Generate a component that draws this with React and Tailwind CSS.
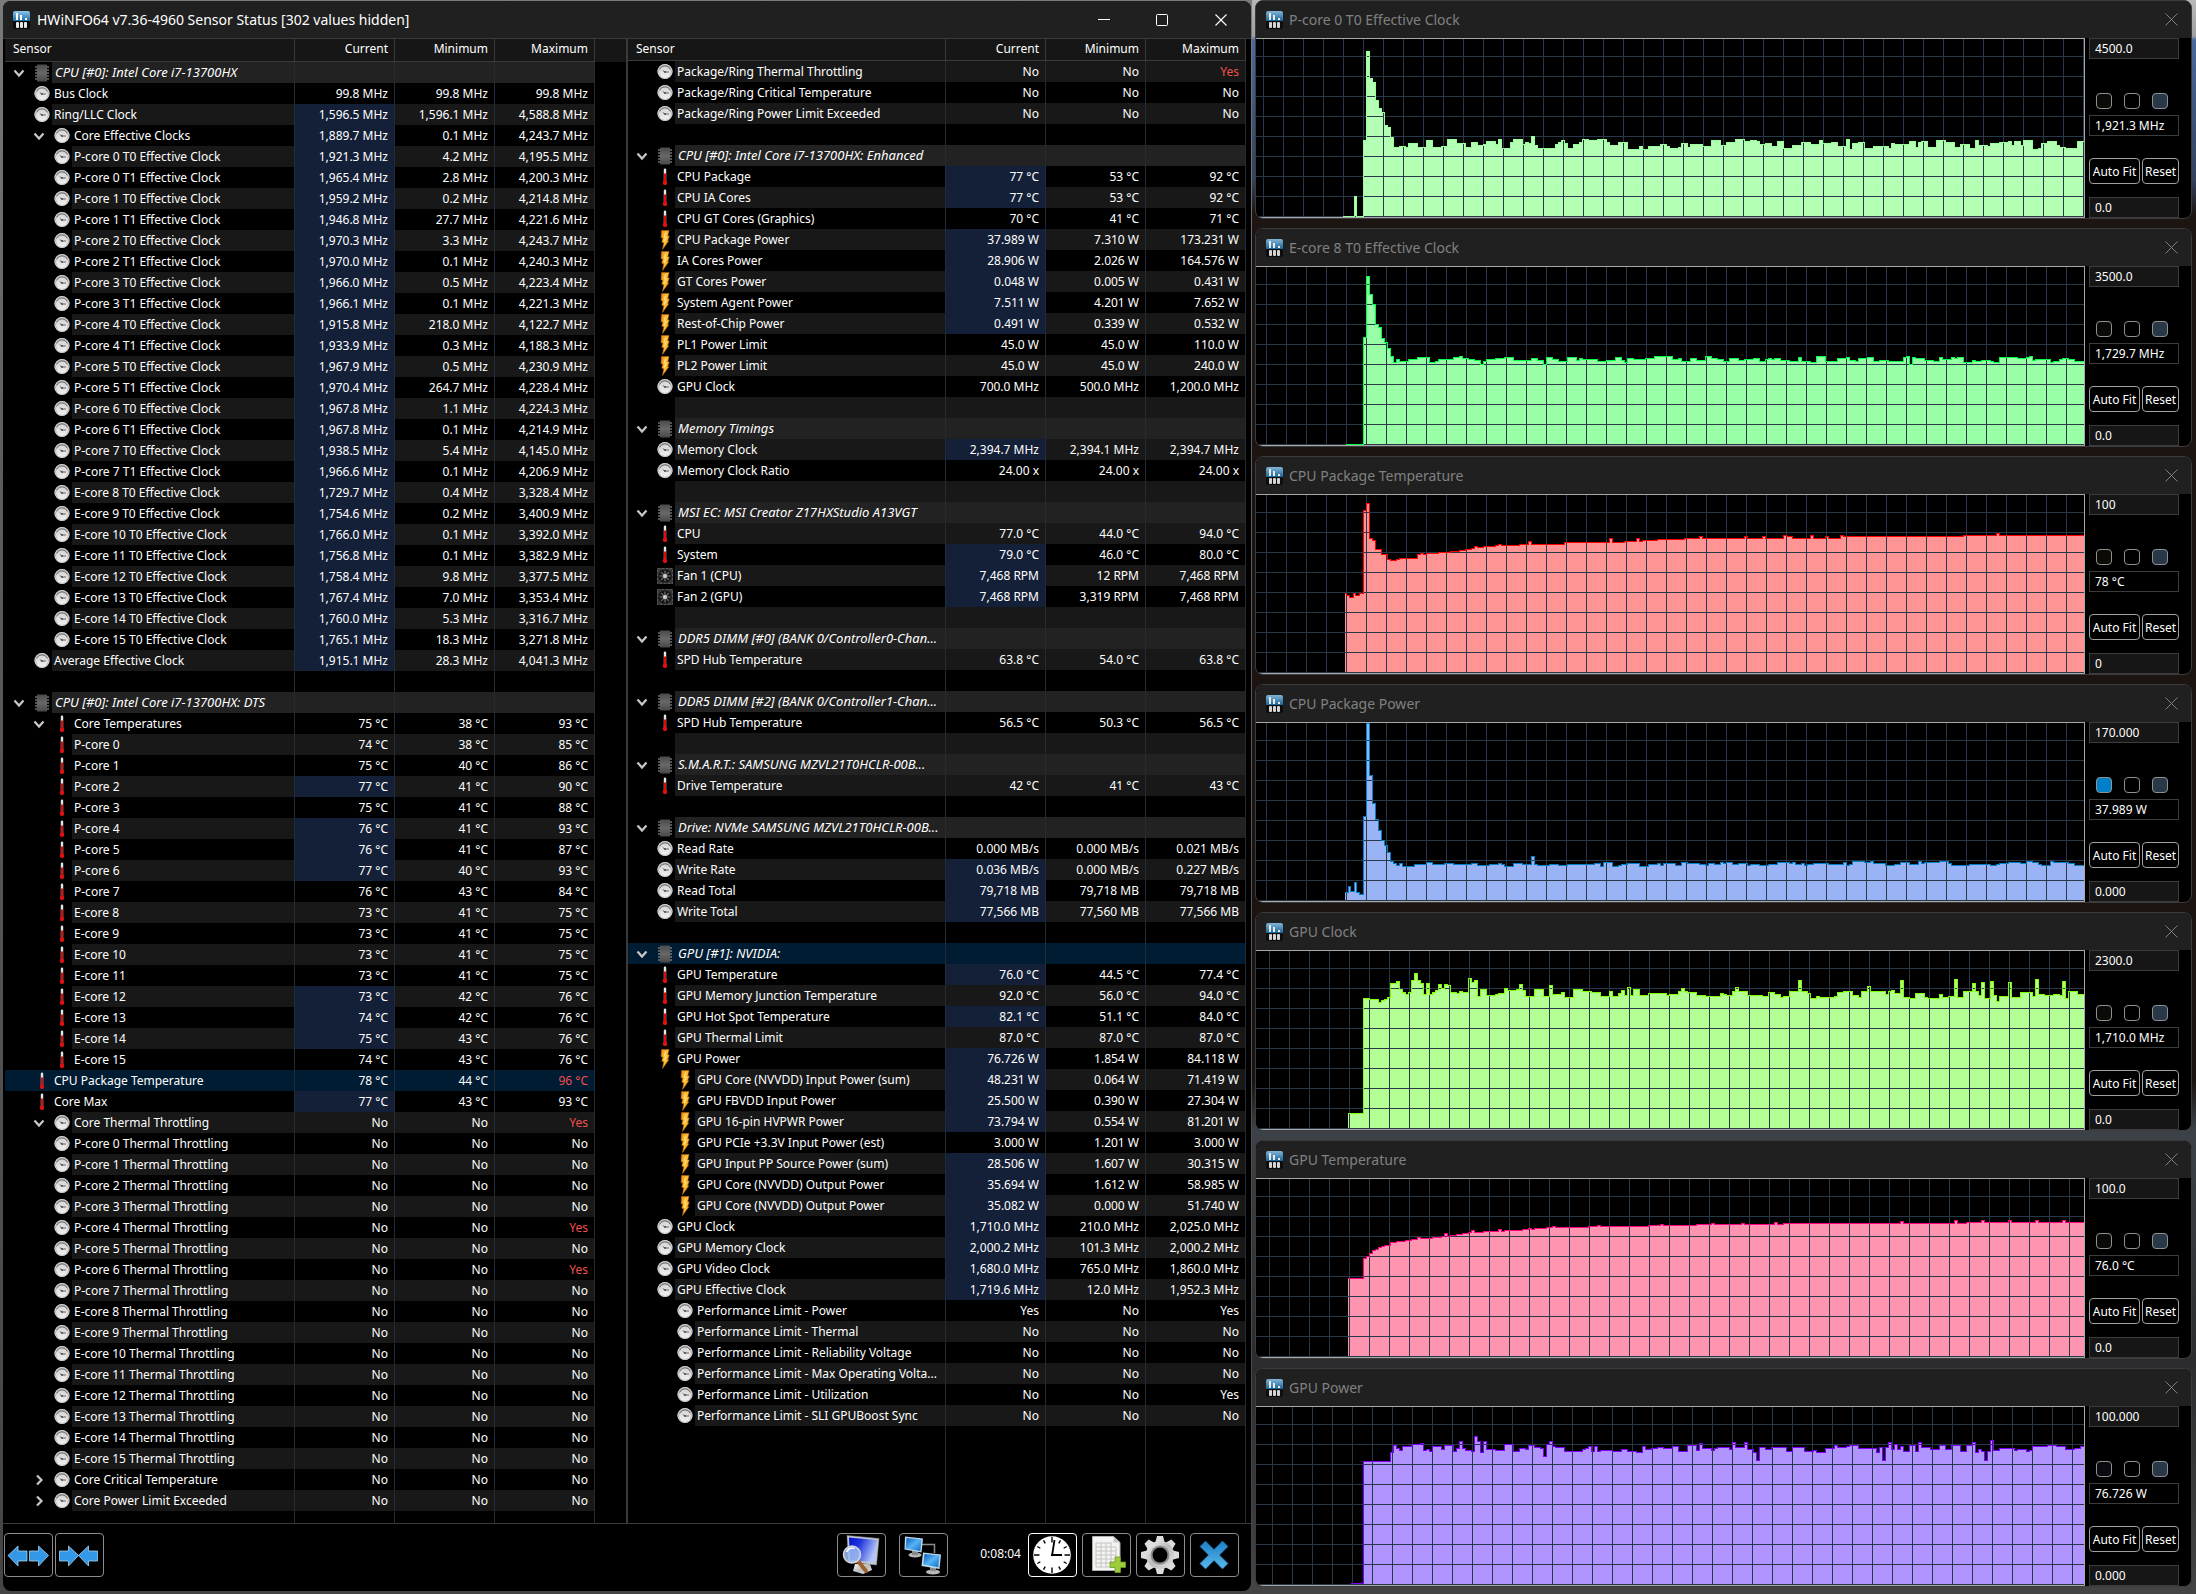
import React from "react";

/* ---------- sensor data: depth | chevron | icon | name | current | min | max | flags ---------- */
/* flags: b = current value changed, r = maximum in red, s = selected row */

const CORES = [
  ["P-core 0 T0", "1,921.3", "4.2", "4,195.5"],
  ["P-core 0 T1", "1,965.4", "2.8", "4,200.3"],
  ["P-core 1 T0", "1,959.2", "0.2", "4,214.8"],
  ["P-core 1 T1", "1,946.8", "27.7", "4,221.6"],
  ["P-core 2 T0", "1,970.3", "3.3", "4,243.7"],
  ["P-core 2 T1", "1,970.0", "0.1", "4,240.3"],
  ["P-core 3 T0", "1,966.0", "0.5", "4,223.4"],
  ["P-core 3 T1", "1,966.1", "0.1", "4,221.3"],
  ["P-core 4 T0", "1,915.8", "218.0", "4,122.7"],
  ["P-core 4 T1", "1,933.9", "0.3", "4,188.3"],
  ["P-core 5 T0", "1,967.9", "0.5", "4,230.9"],
  ["P-core 5 T1", "1,970.4", "264.7", "4,228.4"],
  ["P-core 6 T0", "1,967.8", "1.1", "4,224.3"],
  ["P-core 6 T1", "1,967.8", "0.1", "4,214.9"],
  ["P-core 7 T0", "1,938.5", "5.4", "4,145.0"],
  ["P-core 7 T1", "1,966.6", "0.1", "4,206.9"],
  ["E-core 8 T0", "1,729.7", "0.4", "3,328.4"],
  ["E-core 9 T0", "1,754.6", "0.2", "3,400.9"],
  ["E-core 10 T0", "1,766.0", "0.1", "3,392.0"],
  ["E-core 11 T0", "1,756.8", "0.1", "3,382.9"],
  ["E-core 12 T0", "1,758.4", "9.8", "3,377.5"],
  ["E-core 13 T0", "1,767.4", "7.0", "3,353.4"],
  ["E-core 14 T0", "1,760.0", "5.3", "3,316.7"],
  ["E-core 15 T0", "1,765.1", "18.3", "3,271.8"],
];

const TEMPS = [
  ["P-core 0", 74, 38, 85, ""],
  ["P-core 1", 75, 40, 86, ""],
  ["P-core 2", 77, 41, 90, "b"],
  ["P-core 3", 75, 41, 88, ""],
  ["P-core 4", 76, 41, 93, "b"],
  ["P-core 5", 76, 41, 87, "b"],
  ["P-core 6", 77, 40, 93, "b"],
  ["P-core 7", 76, 43, 84, ""],
  ["E-core 8", 73, 41, 75, ""],
  ["E-core 9", 73, 41, 75, ""],
  ["E-core 10", 73, 41, 75, ""],
  ["E-core 11", 73, 41, 75, ""],
  ["E-core 12", 73, 42, 76, "b"],
  ["E-core 13", 74, 42, 76, "b"],
  ["E-core 14", 75, 43, 76, "b"],
  ["E-core 15", 74, 43, 76, ""],
];

const THROTTLE = [
  "P-core 0", "P-core 1", "P-core 2", "P-core 3", "P-core 4", "P-core 5", "P-core 6", "P-core 7",
  "E-core 8", "E-core 9", "E-core 10", "E-core 11", "E-core 12", "E-core 13", "E-core 14", "E-core 15",
];

const head = (name, flags = "") => ({ head: true, depth: 0, open: "down", icon: "chip", name, v: ["", "", ""], flags });
const row = (depth, icon, name, a, b, c, flags = "", open = "") => ({ depth, icon, name, v: [a, b, c], flags, open });
const blank = { blank: true, depth: 0, icon: "", name: "", v: ["", "", ""], flags: "" };

const LEFT = [
  head("CPU [#0]: Intel Core i7-13700HX"),
  row(0, "clock", "Bus Clock", "99.8 MHz", "99.8 MHz", "99.8 MHz"),
  row(0, "clock", "Ring/LLC Clock", "1,596.5 MHz", "1,596.1 MHz", "4,588.8 MHz", "b"),
  row(1, "clock", "Core Effective Clocks", "1,889.7 MHz", "0.1 MHz", "4,243.7 MHz", "b", "down"),
  ...CORES.map(([n, a, b, c]) => row(1, "clock", `${n} Effective Clock`, `${a} MHz`, `${b} MHz`, `${c} MHz`, "b")),
  row(0, "clock", "Average Effective Clock", "1,915.1 MHz", "28.3 MHz", "4,041.3 MHz", "b"),
  blank,
  head("CPU [#0]: Intel Core i7-13700HX: DTS"),
  row(1, "temp", "Core Temperatures", "75 °C", "38 °C", "93 °C", "", "down"),
  ...TEMPS.map(([n, a, b, c, f]) => row(1, "temp", n, `${a} °C`, `${b} °C`, `${c} °C`, f)),
  row(0, "temp", "CPU Package Temperature", "78 °C", "44 °C", "96 °C", "sr"),
  row(0, "temp", "Core Max", "77 °C", "43 °C", "93 °C", "b"),
  row(1, "clock", "Core Thermal Throttling", "No", "No", "Yes", "r", "down"),
  ...THROTTLE.map((n) => {
    const hot = n === "P-core 4" || n === "P-core 6";
    return row(1, "clock", `${n} Thermal Throttling`, "No", "No", hot ? "Yes" : "No", hot ? "r" : "");
  }),
  row(1, "clock", "Core Critical Temperature", "No", "No", "No", "", "right"),
  row(1, "clock", "Core Power Limit Exceeded", "No", "No", "No", "", "right"),
];

const RIGHT = [
  row(0, "clock", "Package/Ring Thermal Throttling", "No", "No", "Yes", "r"),
  row(0, "clock", "Package/Ring Critical Temperature", "No", "No", "No"),
  row(0, "clock", "Package/Ring Power Limit Exceeded", "No", "No", "No"),
  blank,
  head("CPU [#0]: Intel Core i7-13700HX: Enhanced"),
  row(0, "temp", "CPU Package", "77 °C", "53 °C", "92 °C", "b"),
  row(0, "temp", "CPU IA Cores", "77 °C", "53 °C", "92 °C", "b"),
  row(0, "temp", "CPU GT Cores (Graphics)", "70 °C", "41 °C", "71 °C"),
  row(0, "bolt", "CPU Package Power", "37.989 W", "7.310 W", "173.231 W", "b"),
  row(0, "bolt", "IA Cores Power", "28.906 W", "2.026 W", "164.576 W", "b"),
  row(0, "bolt", "GT Cores Power", "0.048 W", "0.005 W", "0.431 W", "b"),
  row(0, "bolt", "System Agent Power", "7.511 W", "4.201 W", "7.652 W", "b"),
  row(0, "bolt", "Rest-of-Chip Power", "0.491 W", "0.339 W", "0.532 W", "b"),
  row(0, "bolt", "PL1 Power Limit", "45.0 W", "45.0 W", "110.0 W"),
  row(0, "bolt", "PL2 Power Limit", "45.0 W", "45.0 W", "240.0 W"),
  row(0, "clock", "GPU Clock", "700.0 MHz", "500.0 MHz", "1,200.0 MHz"),
  blank,
  head("Memory Timings"),
  row(0, "clock", "Memory Clock", "2,394.7 MHz", "2,394.1 MHz", "2,394.7 MHz", "b"),
  row(0, "clock", "Memory Clock Ratio", "24.00 x", "24.00 x", "24.00 x"),
  blank,
  head("MSI EC: MSI Creator Z17HXStudio A13VGT"),
  row(0, "temp", "CPU", "77.0 °C", "44.0 °C", "94.0 °C"),
  row(0, "temp", "System", "79.0 °C", "46.0 °C", "80.0 °C", "b"),
  row(0, "fan", "Fan 1 (CPU)", "7,468 RPM", "12 RPM", "7,468 RPM", "b"),
  row(0, "fan", "Fan 2 (GPU)", "7,468 RPM", "3,319 RPM", "7,468 RPM", "b"),
  blank,
  head("DDR5 DIMM [#0] (BANK 0/Controller0-Chan..."),
  row(0, "temp", "SPD Hub Temperature", "63.8 °C", "54.0 °C", "63.8 °C"),
  blank,
  head("DDR5 DIMM [#2] (BANK 0/Controller1-Chan..."),
  row(0, "temp", "SPD Hub Temperature", "56.5 °C", "50.3 °C", "56.5 °C"),
  blank,
  head("S.M.A.R.T.: SAMSUNG MZVL21T0HCLR-00B..."),
  row(0, "temp", "Drive Temperature", "42 °C", "41 °C", "43 °C"),
  blank,
  head("Drive: NVMe SAMSUNG MZVL21T0HCLR-00B..."),
  row(0, "clock", "Read Rate", "0.000 MB/s", "0.000 MB/s", "0.021 MB/s"),
  row(0, "clock", "Write Rate", "0.036 MB/s", "0.000 MB/s", "0.227 MB/s", "b"),
  row(0, "clock", "Read Total", "79,718 MB", "79,718 MB", "79,718 MB", "b"),
  row(0, "clock", "Write Total", "77,566 MB", "77,560 MB", "77,566 MB", "b"),
  blank,
  head("GPU [#1]: NVIDIA:", "s"),
  row(0, "temp", "GPU Temperature", "76.0 °C", "44.5 °C", "77.4 °C", "b"),
  row(0, "temp", "GPU Memory Junction Temperature", "92.0 °C", "56.0 °C", "94.0 °C"),
  row(0, "temp", "GPU Hot Spot Temperature", "82.1 °C", "51.1 °C", "84.0 °C", "b"),
  row(0, "temp", "GPU Thermal Limit", "87.0 °C", "87.0 °C", "87.0 °C"),
  row(0, "bolt", "GPU Power", "76.726 W", "1.854 W", "84.118 W", "b"),
  row(1, "bolt", "GPU Core (NVVDD) Input Power (sum)", "48.231 W", "0.064 W", "71.419 W", "b"),
  row(1, "bolt", "GPU FBVDD Input Power", "25.500 W", "0.390 W", "27.304 W", "b"),
  row(1, "bolt", "GPU 16-pin HVPWR Power", "73.794 W", "0.554 W", "81.201 W", "b"),
  row(1, "bolt", "GPU PCIe +3.3V Input Power (est)", "3.000 W", "1.201 W", "3.000 W"),
  row(1, "bolt", "GPU Input PP Source Power (sum)", "28.506 W", "1.607 W", "30.315 W", "b"),
  row(1, "bolt", "GPU Core (NVVDD) Output Power", "35.694 W", "1.612 W", "58.985 W", "b"),
  row(1, "bolt", "GPU Core (NVVDD) Output Power", "35.082 W", "0.000 W", "51.740 W", "b"),
  row(0, "clock", "GPU Clock", "1,710.0 MHz", "210.0 MHz", "2,025.0 MHz", "b"),
  row(0, "clock", "GPU Memory Clock", "2,000.2 MHz", "101.3 MHz", "2,000.2 MHz", "b"),
  row(0, "clock", "GPU Video Clock", "1,680.0 MHz", "765.0 MHz", "1,860.0 MHz", "b"),
  row(0, "clock", "GPU Effective Clock", "1,719.6 MHz", "12.0 MHz", "1,952.3 MHz", "b"),
  row(1, "clock", "Performance Limit - Power", "Yes", "No", "Yes"),
  row(1, "clock", "Performance Limit - Thermal", "No", "No", "No"),
  row(1, "clock", "Performance Limit - Reliability Voltage", "No", "No", "No"),
  row(1, "clock", "Performance Limit - Max Operating Volta...", "No", "No", "No"),
  row(1, "clock", "Performance Limit - Utilization", "No", "No", "Yes"),
  row(1, "clock", "Performance Limit - SLI GPUBoost Sync", "No", "No", "No"),
];

/* ---------- small icons ---------- */

function AppIcon({ dim }) {
  return (
    <svg width="17" height="18" viewBox="0 0 17 18" className={dim ? "shrink-0 opacity-90" : "shrink-0"} aria-hidden="true">
      <rect x="0" y="0" width="17" height="18" rx="2" fill="#0b0b0d" />
      <path d="M0 10V2a2 2 0 0 1 2-2h13a2 2 0 0 1 2 2v8z" fill="url(#appBlue)" />
      <rect x="3" y="2" width="2" height="7" fill="#fff" />
      <rect x="7" y="4" width="2" height="5" fill="#fff" />
      <rect x="12" y="7" width="2" height="2" fill="#fff" />
      <rect x="3" y="11" width="3" height="6" rx="1" fill="#e8e8e8" />
      <rect x="7" y="11" width="3" height="6" rx="1" fill="#e8e8e8" />
      <rect x="11" y="11" width="3" height="6" rx="1" fill="#e8e8e8" />
    </svg>
  );
}

function RowIcon({ kind }) {
  if (kind === "clock")
    return (
      <svg width="16" height="18" viewBox="0 0 16 18" aria-hidden="true">
        <circle cx="8" cy="8.5" r="7.6" fill="#a4a4a4" />
        <circle cx="8" cy="8.5" r="7" fill="none" stroke="#dedede" strokeWidth="0.8" />
        <circle cx="8" cy="9" r="6" fill="url(#dialFill)" />
        <path d="M2.8 6.4a5.600 5.600 0 0 1 10.400 0" fill="none" stroke="#6e6e6e" strokeWidth="0.9" />
        <path d="M5.800 7.600l2.200 1.400h4" fill="none" stroke="#76605a" strokeWidth="1" />
        <circle cx="8" cy="9" r="0.900" fill="#444" />
      </svg>
    );
  if (kind === "temp")
    return (
      <svg width="16" height="18" viewBox="0 0 16 18" aria-hidden="true">
        <rect x="6.800" y="0.500" width="2.400" height="14" rx="1.200" fill="#e4e8e8" />
        <rect x="7" y="5.500" width="2" height="9" fill="#e00c0c" />
        <ellipse cx="8" cy="14.800" rx="2.200" ry="2.400" fill="#e01010" />
      </svg>
    );
  if (kind === "bolt")
    return (
      <svg width="16" height="20" viewBox="0 0 16 20" aria-hidden="true">
        <path d="M4.500 0.500h7.500l-1.300 5.300 1.600 0.300-1.600 4.500 1 0.300L5.500 19.500l1.300-6.800-2-0.500 1-4.200-1.700-0.300z" fill="url(#boltFill)" stroke="#b5640a" strokeWidth="0.600" />
        <path d="M8.500 2.500l-1.200 4.300 1.600 0.400-1.600 4.300" fill="none" stroke="#ffe79a" strokeWidth="1" />
      </svg>
    );
  if (kind === "fan")
    return (
      <svg width="16" height="16" viewBox="0 0 16 16" aria-hidden="true">
        <rect x="0.500" y="0.500" width="15" height="15" fill="#383838" stroke="#5a5a5a" strokeDasharray="3 1" />
        <circle cx="8" cy="8" r="6.800" fill="#161616" />
        <path d="M8 2.500v11M2.500 8h11M4.200 4.200l7.600 7.600M11.800 4.200l-7.600 7.600" stroke="#787878" strokeWidth="1.100" />
        <circle cx="8" cy="8" r="2" fill="#d8cccc" />
      </svg>
    );
  if (kind === "chip")
    return (
      <svg width="16" height="18" viewBox="0 0 16 18" aria-hidden="true">
        <path d="M2 2.500v14M14 2.500v14" stroke="#a8a8a8" strokeWidth="2" strokeDasharray="1 2" />
        <rect x="3" y="0.500" width="10" height="17" rx="0.500" fill="url(#chipFill)" />
      </svg>
    );
  return null;
}

function Chevron({ dir }) {
  return (
    <svg width="12" height="12" viewBox="0 0 12 12" aria-hidden="true">
      <path d={dir === "down" ? "M1.500 3.500L6 8.500l4.500-5" : "M4 1.500L8.500 6 4 10.500"} fill="none" stroke="#c8c8c8" strokeWidth="2.200" />
    </svg>
  );
}

function SharedDefs() {
  return (
    <svg width="0" height="0" className="absolute" aria-hidden="true">
      <defs>
        <linearGradient id="appBlue" x1="0" y1="0" x2="0" y2="1">
          <stop offset="0" stopColor="#8cc4ea" />
          <stop offset="1" stopColor="#1c6ea8" />
        </linearGradient>
        <linearGradient id="dialFill" x1="0" y1="0" x2="0" y2="1">
          <stop offset="0" stopColor="#d4d4d4" />
          <stop offset="1" stopColor="#f0f0f0" />
        </linearGradient>
        <linearGradient id="boltFill" x1="0" y1="0" x2="1" y2="1">
          <stop offset="0" stopColor="#f08a12" />
          <stop offset="0.5" stopColor="#ffc83c" />
          <stop offset="1" stopColor="#e8860c" />
        </linearGradient>
        <linearGradient id="chipFill" x1="0" y1="0" x2="0" y2="1">
          <stop offset="0" stopColor="#4a4a4a" />
          <stop offset="0.5" stopColor="#686868" />
          <stop offset="1" stopColor="#484848" />
        </linearGradient>
        <linearGradient id="screenBlue" x1="0" y1="0" x2="1" y2="0.4">
          <stop offset="0" stopColor="#0010c8" />
          <stop offset="0.4" stopColor="#1c34dc" />
          <stop offset="1" stopColor="#b4c4f8" />
        </linearGradient>
        <linearGradient id="miniScreen" x1="0" y1="0" x2="1" y2="1">
          <stop offset="0" stopColor="#0a58b4" />
          <stop offset="0.5" stopColor="#58b4f4" />
          <stop offset="1" stopColor="#0c6cc8" />
        </linearGradient>
        <linearGradient id="metal" x1="0" y1="0" x2="1" y2="1">
          <stop offset="0" stopColor="#f4f4f4" />
          <stop offset="0.5" stopColor="#bcbcbc" />
          <stop offset="1" stopColor="#e4e4e4" />
        </linearGradient>
        <linearGradient id="crossBlue" x1="0" y1="0" x2="0" y2="1">
          <stop offset="0" stopColor="#1c80c4" />
          <stop offset="1" stopColor="#5cb8ec" />
        </linearGradient>
      </defs>
    </svg>
  );
}

/* ---------- sensor table ---------- */

function SensorRow({ r, index, spare }) {
  const selected = r.flags.includes("s");
  const zebra = index % 2 === 0;
  const bg = selected ? "bg-[#001c33]" : r.head ? "bg-[#222222]" : zebra ? "bg-[#181818]" : "bg-black";
  const cur = r.flags.includes("b") ? "bg-[#142038]" : bg;
  const red = r.flags.includes("r");
  return (
    <tr className="h-[21px]">
      <th scope="row" className={`border-r border-[#222c38] p-0 text-left font-normal ${selected ? "bg-[#001c33]" : "bg-black"}`}>
        <div className={`flex h-[21px] items-center ${r.depth ? "pl-[27px]" : "pl-[7px]"}`}>
          <span className="flex w-[14px] shrink-0 justify-center">
            {r.open ? (
              <button type="button" aria-label={`${r.open === "down" ? "Collapse" : "Expand"} ${r.name}`} aria-expanded={r.open === "down"} className="block">
                <Chevron dir={r.open} />
              </button>
            ) : null}
          </span>
          <span className="mr-[2px] ml-2 flex h-[21px] w-4 shrink-0 items-center justify-center">
            <RowIcon kind={r.icon} />
          </span>
          <span className={`min-w-0 flex-1 self-stretch overflow-hidden ${bg} ${r.head ? "pl-[3px] text-[13px] leading-[21px] italic" : "pl-[2px]"}`}>{r.name}</span>
        </div>
      </th>
      <td className={`border-r border-[#222c38] px-[6px] py-0 text-right ${cur}`}>{r.v[0]}</td>
      <td className={`border-r border-[#222c38] px-[6px] py-0 text-right ${bg}`}>{r.v[1]}</td>
      <td className={`border-r border-[#222c38] px-[6px] py-0 text-right ${bg} ${red ? "text-[#f0504c]" : ""}`}>{r.v[2]}</td>
      {spare ? <td className="p-0" /> : null}
    </tr>
  );
}

function SensorTable({ rows, label, spare }) {
  const line = "border-r border-[#222c38] p-0";
  const th = "border-r border-b border-[#3a3a3a] px-[6px] py-0 align-top font-normal leading-[19px]";
  return (
    <table aria-label={label} className="h-full w-full table-fixed border-separate border-spacing-0 whitespace-nowrap text-white">
      <colgroup>
        <col />
        <col className="w-[100px]" />
        <col className="w-[100px]" />
        <col className="w-[100px]" />
        {spare ? <col className="w-[31px]" /> : null}
      </colgroup>
      <thead>
        <tr className={`bg-[#161616] ${spare ? "h-[23px]" : "h-[22px]"}`}>
          <th scope="col" className={`${th} pl-2 text-left`}>Sensor</th>
          <th scope="col" className={`${th} text-right`}>Current</th>
          <th scope="col" className={`${th} text-right`}>Minimum</th>
          <th scope="col" className={`${th} text-right`}>Maximum</th>
          {spare ? <td className="p-0" /> : null}
        </tr>
      </thead>
      <tbody>
        {rows.map((r, i) => (
          <SensorRow key={i} r={r} index={i} spare={spare} />
        ))}
        <tr>
          <td className={line} />
          <td className={line} />
          <td className={line} />
          <td className={line} />
          {spare ? <td className="p-0" /> : null}
        </tr>
      </tbody>
    </table>
  );
}

/* ---------- toolbar ---------- */

function ToolButton({ label, bright, children }) {
  return (
    <button
      type="button"
      aria-label={label}
      className={`flex h-11 w-[49px] items-center justify-center rounded-[4px] border bg-black ${bright ? "border-white" : "border-[#8c8c8c]"}`}
    >
      <svg width="47" height="42" viewBox="1 1 47 42" aria-hidden="true">
        {children}
      </svg>
    </button>
  );
}

const ARROW = { fill: "#3498e8", stroke: "#a8d0ee", strokeWidth: 0.8 };

function Toolbar() {
  const ticks = Array.from({ length: 12 }, (_, i) => i * 30);
  const teeth = Array.from({ length: 8 }, (_, i) => i * 45);
  return (
    <footer className="flex items-start border-t border-[#3a3a3a] pt-[9px] pr-3 pb-[14px] pl-px">
      <div className="flex gap-[2px]">
        <ToolButton label="Expand columns">
          <path d="M4 22.500l10-9.500v5h9v10h-9v5z" {...ARROW} />
          <path d="M44.500 22.500l-10-9.500v5h-9v10h9v5z" {...ARROW} />
        </ToolButton>
        <ToolButton label="Shrink columns">
          <path d="M23.500 22.500l-10-9.500v5h-9v10h9v5z" {...ARROW} />
          <path d="M23.500 22.500l10-9.500v5h9v10h-9v5z" {...ARROW} />
        </ToolButton>
      </div>
      <div className="ml-auto flex items-center">
        <div className="flex gap-[13px]">
          <ToolButton label="System summary">
            <path d="M18 31h15l2 6-9 4-10-3z" fill="url(#metal)" />
            <path d="M10 2.500l32 3-2.500 26.500-28-3z" fill="#c4c8d0" stroke="#888" strokeWidth="0.5" />
            <path d="M12 4.500l28 2.600-2 22.400-25-2.600z" fill="url(#screenBlue)" />
            <path d="M21 28l8 10" stroke="#a0602c" strokeWidth="4" strokeLinecap="round" />
            <circle cx="15" cy="21.500" r="8.500" fill="#9fc0f0" fillOpacity="0.85" stroke="#d4d8e0" strokeWidth="1.500" />
            <path d="M9.500 19a6 6 0 0 1 8-3.500" stroke="#fff" strokeWidth="1.500" fill="none" />
          </ToolButton>
          <ToolButton label="Remote monitoring">
            <path d="M23 11.500h12.500V20" fill="none" stroke="#8a8a8a" strokeWidth="1.500" />
            <ellipse cx="16" cy="22" rx="6.500" ry="2.500" fill="#b8b8b8" />
            <path d="M13 18h6v4h-6z" fill="#888" />
            <path d="M6 3.500l18 2-1.500 14-17-3z" fill="#bcd8ec" />
            <path d="M7.500 5l15 1.600-1.200 11.400-14.600-2.600z" fill="url(#miniScreen)" />
            <ellipse cx="34" cy="39" rx="7" ry="2.500" fill="#b8b8b8" />
            <path d="M31 34h6v4h-6z" fill="#888" />
            <path d="M24 19.500l18 2-1.500 14.500-18-3z" fill="#bcd8ec" />
            <path d="M25.500 21l15 1.600-1.200 11.600-15-2.600z" fill="url(#miniScreen)" />
          </ToolButton>
        </div>
        <output aria-label="Elapsed time" className="-mt-1 w-[80px] pr-[7px] text-right text-white">0:08:04</output>
        <div className="flex gap-[5px]">
          <ToolButton label="Reset timer" bright>
            <circle cx="24" cy="22" r="18.800" fill="#fff" />
            <g stroke="#000" strokeWidth="1.400">
              {ticks.map((a) => (
                <path key={a} d={a % 90 === 0 ? "M24 4v5.500" : "M24 5v3.500"} transform={`rotate(${a} 24 22)`} />
              ))}
            </g>
            <path d="M24 23l2.500-16" stroke="#000" strokeWidth="1.800" />
            <path d="M23 22h11" stroke="#000" strokeWidth="2.200" />
          </ToolButton>
          <ToolButton label="Start logging">
            <path d="M10.500 3.500h21l6.500 6v28h-27.500z" fill="#f4f4f2" stroke="#b0b0b0" />
            <path d="M31.500 3.500v6h6.500z" fill="#c8c8c8" />
            <path d="M14 10h16M14 14h20M14 18h20M14 22h20M14 26h18M14 30h16M14 34h14M14 10v24M19 10v24M24 10v24M29 10v20M34 14v12" stroke="#c4c4c4" strokeWidth="1" fill="none" />
            <path d="M33 24h5.500v5h5v5.500h-5v5H33v-5h-5V29h5z" fill="#9ccc3c" stroke="#6c9c1c" strokeWidth="0.800" />
          </ToolButton>
          <ToolButton label="Settings">
            {teeth.map((a) => (
              <path key={a} d="M21 3h6l1.800 7h-9.600z" transform={`rotate(${a} 24 22)`} fill="#dcdcdc" />
            ))}
            <circle cx="24" cy="22" r="14" fill="url(#metal)" />
            <circle cx="24" cy="22" r="9.500" fill="#8c8c8c" />
            <circle cx="24" cy="22" r="7.500" fill="#000" />
          </ToolButton>
          <ToolButton label="Close sensors">
            <path d="M15.500 8L24 16.500 32.500 8l5.500 5.500-8.500 8.500 8.500 8.500-5.500 5.500-8.500-8.500-8.500 8.500-5.500-5.500 8.500-8.500-8.500-8.500z" fill="url(#crossBlue)" stroke="#1a6ca8" strokeWidth="0.600" />
          </ToolButton>
        </div>
      </div>
    </footer>
  );
}

/* ---------- graphs ---------- */

function seeded(seed) {
  let s = seed;
  return () => {
    s = (s * 1103515245 + 12345) % 2147483648;
    return s / 2147483648;
  };
}

/* Sample tops are in plot units: 3 units per sample, 178 units high. */
function buildSamples({ lead, intro, curve, noise, spikes, seed }) {
  const rnd = seeded(seed);
  const out = [];
  const start = 108;
  intro.forEach((y) => out.push(y));
  let hold = 0;
  let n = 0;
  for (let i = intro.length; i < 240; i++) {
    let k = 0;
    while (k < curve.length - 2 && curve[k + 1][0] <= i) k++;
    const [i0, y0] = curve[k];
    const [i1, y1] = curve[k + 1];
    const t = Math.min(1, Math.max(0, (i - i0) / (i1 - i0)));
    if (hold <= 0) {
      n = Math.round((rnd() - 0.5) * noise * 2);
      hold = 1 + Math.floor(rnd() * 3);
    }
    hold--;
    out.push(Math.round(y0 + (y1 - y0) * t) + n);
  }
  Object.entries(spikes).forEach(([i, y]) => {
    out[Number(i)] = y;
  });
  return { out, start, lead };
}

function Plot({ graph }) {
  const { out, start, lead } = buildSamples(graph);
  let line = "";
  lead.forEach(([x, y], i) => {
    line += i === 0 ? `M${x} ${y}` : `H${x}V${y}`;
  });
  out.forEach((y, i) => {
    line += `H${start + i * 3}V${y}`;
  });
  line += "H828";
  const area = `${line}V178H${lead[0][0]}Z`;
  const vx = Array.from({ length: 42 }, (_, i) => graph.grid + i * 20).filter((x) => x < 828);
  const hy = Array.from({ length: 9 }, (_, i) => 17 + i * 20);
  return (
    <svg viewBox="0 0 828 178" preserveAspectRatio="none" shapeRendering="crispEdges" className="block h-[178px] w-full" role="img" aria-label={`${graph.title} history`}>
      <path d={area} fill={graph.fill} />
      <g fill="#283848">
        {vx.map((x) => (
          <rect key={x} x={x} y="0" width="1" height="178" />
        ))}
        {hy.map((y) => (
          <rect key={y} x="0" y={y} width="828" height="1" />
        ))}
      </g>
      <path d={line} fill="none" stroke={graph.stroke} strokeWidth="1" transform="translate(-0.500 0.500)" />
    </svg>
  );
}

const GRAPHS = [
  {
    title: "P-core 0 T0 Effective Clock", top: "4500.0", now: "1,921.3 MHz", bottom: "0.0",
    fill: "#b3ffb3", stroke: "#99ff99", swatch: "bg-[#0a0a06]", grid: 7, seed: 11, noise: 5,
    lead: [[87, 177], [99, 157], [101, 177], [108, 177]],
    intro: [101, 12, 39, 43, 61, 69, 73, 86, 88, 98, 108, 108],
    curve: [[0, 105], [240, 105]],
    spikes: { 56: 97 },
  },
  {
    title: "E-core 8 T0 Effective Clock", top: "3500.0", now: "1,729.7 MHz", bottom: "0.0",
    fill: "#99ffa6", stroke: "#00ff48", swatch: "bg-[#0a0a06]", grid: 10, seed: 29, noise: 3,
    lead: [[90, 177], [108, 177]],
    intro: [70, 9, 27, 37, 57, 60, 71, 75, 81, 89, 95, 92],
    curve: [[0, 92], [240, 92]],
    spikes: { 39: 97, 60: 97, 182: 97 },
  },
  {
    title: "CPU Package Temperature", top: "100", now: "78 °C", bottom: "0",
    fill: "#ff9494", stroke: "#ff0000", swatch: "bg-[#0c0a04]", grid: 10, seed: 5, noise: 0,
    lead: [[89, 98], [91, 100], [94, 102], [98, 98], [100, 100], [104, 98], [108, 98]],
    intro: [15, 8, 43, 45, 54, 54, 59, 59, 64, 65, 65, 64, 63, 63, 63, 63, 63, 63, 59, 58],
    curve: [[18, 59], [30, 56], [40, 51], [55, 49], [66, 49], [67, 47], [84, 47], [100, 44], [112, 43], [158, 43], [159, 41], [240, 40]],
    spikes: { 37: 51, 45: 49, 55: 46, 82: 43, 91: 43, 112: 41, 127: 41, 133: 41, 140: 40, 141: 41, 142: 41, 149: 40, 154: 41, 159: 40, 211: 38 },
  },
  {
    title: "CPU Package Power", top: "170.000", now: "37.989 W", bottom: "0.000",
    fill: "#99b3f5", stroke: "#0080c8", swatch: "bg-[#0080c8]", grid: 10, seed: 47, noise: 2,
    lead: [[89, 169], [93, 163], [95, 168], [99, 159], [101, 169], [104, 171]],
    intro: [93, 0, 52, 80, 96, 107, 117, 122, 129, 138, 140, 142],
    curve: [[0, 141], [240, 140]],
    spikes: { 56: 133 },
  },
  {
    title: "GPU Clock", top: "2300.0", now: "1,710.0 MHz", bottom: "0.0",
    fill: "#b3ff94", stroke: "#80ff00", swatch: "bg-[#0a0a06]", grid: 13, seed: 71, noise: 4,
    lead: [[92, 162], [108, 162]],
    intro: [47, 47, 48, 48, 48, 51, 49, 48, 46, 32, 32, 30, 38, 41, 43, 41, 29, 22, 29, 32, 43, 32, 43, 41, 39, 33, 37, 33, 34],
    curve: [[0, 40], [80, 42], [160, 43], [240, 43]],
    spikes: { 35: 27, 36: 31, 37: 29, 52: 33, 62: 34, 88: 36, 106: 37, 124: 36, 145: 29, 168: 35, 179: 29, 197: 28, 203: 32, 206: 31, 209: 30, 211: 50, 215: 31, 224: 28, 233: 30 },
  },
  {
    title: "GPU Temperature", top: "100.0", now: "76.0 °C", bottom: "0.0",
    fill: "#ff94b0", stroke: "#ff0080", swatch: "bg-[#0a0a06]", grid: 13, seed: 3, noise: 0,
    lead: [[92, 99], [108, 99]],
    intro: [79, 77, 74, 71, 70, 68, 67, 66, 66, 63, 63, 62, 62],
    curve: [[12, 62], [17, 60], [27, 57], [36, 53], [50, 51], [62, 48], [86, 47], [118, 45], [160, 44], [240, 43]],
    spikes: { 18: 58, 27: 54, 36: 51, 45: 50, 55: 49, 63: 47, 78: 46, 99: 45, 116: 44, 126: 44, 137: 43, 179: 42, 197: 41, 206: 41, 215: 41, 224: 41, 233: 41 },
  },
  {
    title: "GPU Power", top: "100.000", now: "76.726 W", bottom: "0.000",
    fill: "#b094ff", stroke: "#8000ff", swatch: "bg-[#0a0a10]", grid: 16, seed: 97, noise: 4,
    lead: [[95, 176], [108, 176]],
    intro: [54, 54, 54, 54, 54, 54, 54, 54, 54, 45, 38, 41, 43, 39, 39, 39, 37, 37, 37, 36, 43, 42],
    curve: [[0, 41], [240, 41]],
    spikes: { 32: 34, 37: 29, 38: 34, 40: 34, 60: 49, 61: 37, 62: 34, 112: 36, 123: 35, 127: 35, 131: 53, 173: 53, 175: 35, 185: 35, 203: 35, 207: 53, 209: 33 },
  },
];

function GraphWindow({ graph }) {
  const field = "block h-[21px] w-full border border-[#3c3c3c] px-[5px] py-0 text-white outline-none";
  return (
    <section aria-label={graph.title} className="overflow-hidden rounded-lg border border-[#3c3c3c] bg-black">
      <header className="flex h-[37px] items-center bg-[#202020] pl-[10px]">
        <AppIcon dim />
        <h2 className="ml-[6px] text-sm text-[#808080]">{graph.title}</h2>
        <button type="button" aria-label={`Close ${graph.title}`} className="ml-auto flex h-full w-10 items-center justify-center">
          <svg width="13" height="13" viewBox="0 0 13 13" aria-hidden="true">
            <path d="M0.500 0.500l12 12M12.500 0.500l-12 12" stroke="#808080" strokeWidth="1" />
          </svg>
        </button>
      </header>
      <div className="flex">
        <div className="min-w-0 flex-1 border-y border-r border-[#a8a8a8]">
          <Plot graph={graph} />
        </div>
        <div className="w-[106px] shrink-0 pr-[12px] pl-1">
          <input aria-label={`${graph.title} upper limit`} defaultValue={graph.top} className={`${field} bg-[#161616]`} />
          <div className="mt-[34px] flex gap-3 pl-[7px]">
            <button type="button" aria-label="Line colour" className={`size-4 rounded-[4px] border border-[#909090] ${graph.swatch}`} />
            <button type="button" aria-label="Background colour" className="size-4 rounded-[4px] border border-[#909090] bg-black" />
            <button type="button" aria-label="Grid colour" className="size-4 rounded-[4px] border border-[#909090] bg-[#283848]" />
          </div>
          <input aria-label={`${graph.title} current value`} readOnly value={graph.now} className={`${field} mt-[6px] bg-black`} />
          <div className="mt-[22px] flex gap-[2px]">
            <button type="button" className="h-[26px] w-[51px] rounded-[4px] border border-[#a0a0a0] text-white">Auto Fit</button>
            <button type="button" className="h-[26px] flex-1 rounded-[4px] border border-[#a0a0a0] text-white">Reset</button>
          </div>
          <input aria-label={`${graph.title} lower limit`} defaultValue={graph.bottom} className={`${field} mt-[13px] bg-[#161616]`} />
        </div>
      </div>
    </section>
  );
}

/* ---------- page ---------- */

export default function App() {
  return (
    <div className="grid min-h-screen grid-cols-[1252fr_944fr] bg-[linear-gradient(180deg,#7a7a7a,#5c5c5c_30%,#505050_70%,#444444)] font-['Noto_Sans',sans-serif] text-xs leading-[21px]">
      <SharedDefs />
      <main className="mt-px mr-px mb-[3px] ml-[3px] flex flex-col overflow-hidden rounded-lg bg-black">
        <header className="flex h-[37px] items-center bg-[#202020] pl-[10px]">
          <AppIcon />
          <h1 className="ml-[7px] text-sm text-white">HWiNFO64 v7.36-4960 Sensor Status [302 values hidden]</h1>
          <div className="ml-auto flex h-full">
            <button type="button" aria-label="Minimize" className="flex w-[58px] items-center justify-center">
              <svg width="12" height="12" viewBox="0 0 12 12" aria-hidden="true"><path d="M0 5.500h12" stroke="#fff" strokeWidth="1" /></svg>
            </button>
            <button type="button" aria-label="Maximize" className="flex w-[58px] items-center justify-center">
              <svg width="12" height="12" viewBox="0 0 12 12" aria-hidden="true"><rect x="0.500" y="0.500" width="11" height="11" rx="1" fill="none" stroke="#fff" /></svg>
            </button>
            <button type="button" aria-label="Close" className="flex w-[60px] items-center justify-center">
              <svg width="12" height="12" viewBox="0 0 12 12" aria-hidden="true"><path d="M0.500 0.500l11 11M11.500 0.500l-11 11" stroke="#fff" strokeWidth="1.100" /></svg>
            </button>
          </div>
        </header>
        <div className="grid flex-1 grid-cols-2 border-t border-[#3a3a3a]">
          <div className="border-r border-[#3a3a3a] pl-[2px]">
            <SensorTable rows={LEFT} label="CPU sensors" spare />
          </div>
          <div className="border-l border-[#3a3a3a] pr-[5px]">
            <SensorTable rows={RIGHT} label="Platform and GPU sensors" />
          </div>
        </div>
        <Toolbar />
      </main>
      <aside className="flex flex-col gap-[9px] bg-[linear-gradient(180deg,#b8b8b8_0,#a0a0a0_36px,#4a6a9c_40px,#33415c_180px,#1c1512_215px,#1a1310_1080px,#3c4248_1130px,#2c2c2e_1360px,#444444_1594px)] pr-1 pl-[3px]">
        {GRAPHS.map((g) => (
          <GraphWindow key={g.title} graph={g} />
        ))}
      </aside>
    </div>
  );
}
